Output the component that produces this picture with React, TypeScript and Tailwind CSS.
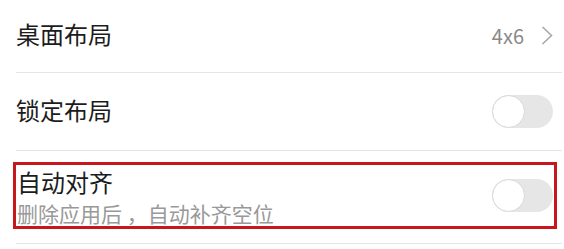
function Toggle() {
  return (
    <div className="w-[61px] h-[33px] rounded-full bg-[#e6e6e6] flex items-center">
      <div className="w-[33px] h-[33px] rounded-full bg-white border-[1.5px] border-[#d8d8d8]" />
    </div>
  )
}

function Divider() {
  return <div className="h-px ml-4 mr-[2px] bg-[#e4e4e4]" />
}

export default function App() {
  return (
    <div
      className="w-[564px] h-[249px] bg-white text-[#1c1c1c]"
      style={{ fontFamily: '"Noto Sans CJK SC", "Noto Sans", sans-serif' }}
    >
      <div className="h-[72px] flex items-center justify-between pl-4 pr-[11px]">
        <span className="text-[24px] leading-[30px] -mt-[4px]">桌面布局</span>
        <div className="flex items-center gap-[17px] text-[#8a8a8a] -mt-[1px]">
          <span className="text-[20px] leading-[26px]">4x6</span>
          <svg width="12" height="19" viewBox="0 0 12 19" fill="none">
            <polyline points="1.5,1 10.5,9.5 1.5,18" stroke="#a8a8a8" strokeWidth="1.6" />
          </svg>
        </div>
      </div>
      <Divider />
      <div className="h-[77px] flex items-center justify-between pl-4 pr-[11px]">
        <span className="text-[24px] leading-[30px] -mt-[3px]">锁定布局</span>
        <Toggle />
      </div>
      <Divider />
      <div className="h-[92px] pl-[13px] pr-[7px] pt-[11px]">
        <div className="border-[3px] border-[#c8161d] h-[67px] flex items-center justify-between pl-px pr-px">
          <div className="flex flex-col">
            <span className="text-[24px] leading-[30px] mt-[1px]">自动对齐</span>
            <span className="text-[21px] leading-[26px] text-[#999999] mt-[3px]">删除应用后 ，自动补齐空位</span>
          </div>
          <Toggle />
        </div>
      </div>
      <Divider />
    </div>
  )
}
